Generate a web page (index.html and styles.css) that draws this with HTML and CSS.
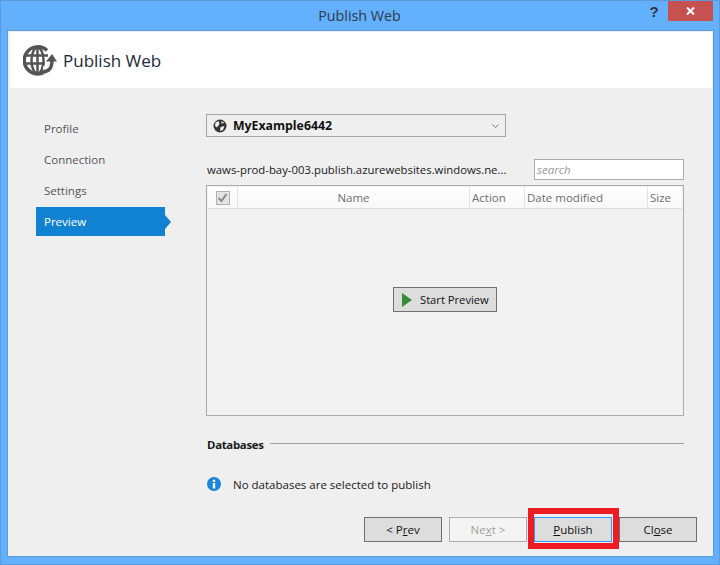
FILE: index.html
```html
<!DOCTYPE html>
<html lang="en">
<head>
<meta charset="utf-8">
<title>Publish Web</title>
<link rel="stylesheet" href="styles.css">
</head>
<body>
<div class="window">
  <div class="titlebar">
    <div class="title">Publish Web</div>
    <div class="help">?</div>
    <div class="close">
      <svg width="9" height="8" viewBox="0 0 9 8"><path d="M1 0.5 L8 7.5 M8 0.5 L1 7.5" stroke="#fff" stroke-width="2" fill="none"/></svg>
    </div>
  </div>
  <div class="client">
    <header class="header">
      <svg class="globe" width="34" height="32" viewBox="0 0 34 32" fill="none" stroke="#555" stroke-width="2.500">
        <path d="M24 5.500 A13.500 13.500 0 1 0 27 21" stroke-width="3.500"/>
        <ellipse cx="14.500" cy="15.500" rx="6" ry="13"/>
        <path d="M14.500 2.500 V28.500 M3 10.500 H25 M2 18.500 H22"/>
        <path d="M20 25 Q28 25 28.500 16" stroke="#fff" stroke-width="7"/>
        <path d="M20 26.500 Q29 27 29 15" stroke-width="3.500"/>
        <path d="M23 16.500 L29 9 L34 16.500 Z" fill="#555" stroke="none"/>
      </svg>
      <h1 class="heading">Publish Web</h1>
    </header>
    <div class="main">
      <nav class="sidebar">
        <div class="step">Profile</div>
        <div class="step">Connection</div>
        <div class="step">Settings</div>
        <div class="step step-active">Preview</div>
      </nav>
      <section class="content">
        <div class="profile-select">
          <svg class="profile-icon" width="14" height="14" viewBox="0 0 14 14">
            <circle cx="7" cy="7" r="6.500" fill="#333"/>
            <path d="M2.500 3.500 L5.500 2 L6.500 5 L4 8.500 L2 7 Z M7.500 8 L11.500 7 L10 11 L7 12 Z M8.500 2 L11.500 4 L8.500 4.500 Z" fill="#efefef"/>
          </svg>
          <span class="profile-name">MyExample6442</span>
          <svg class="chevron" width="7" height="4" viewBox="0 0 7 4"><path d="M0.500 0.500 L3.500 3.500 L6.500 0.500" stroke="#777" fill="none"/></svg>
        </div>
        <div class="url-row">
          <span class="url">waws-prod-bay-003.publish.azurewebsites.windows.ne...</span>
          <div class="search">search</div>
        </div>
        <div class="table">
          <div class="table-head">
            <div class="col col-check"><span class="checkbox"><svg width="11" height="10" viewBox="0 0 11 10"><path d="M1.500 5 L4.500 8 L9.500 1" stroke="#8a8a8a" stroke-width="2" fill="none"/></svg></span></div>
            <div class="col col-name">Name</div>
            <div class="col">Action</div>
            <div class="col">Date modified</div>
            <div class="col col-last">Size</div>
          </div>
          <div class="table-body">
            <button class="btn btn-preview" type="button">
              <svg width="10" height="14" viewBox="0 0 10 14"><path d="M0 0 L10 7 L0 14 Z" fill="#3a8a35"/></svg>
              Start Preview
            </button>
          </div>
        </div>
        <div class="db-heading"><strong class="db-title">Databases</strong><span class="rule"></span></div>
        <div class="info-row">
          <svg width="14" height="14" viewBox="0 0 14 14"><circle cx="7" cy="7" r="7" fill="#1b86d8"/><rect x="5.800" y="6" width="2.400" height="5.500" fill="#fff"/><rect x="5.800" y="2.800" width="2.400" height="2.200" fill="#fff"/></svg>
          <span>No databases are selected to publish</span>
        </div>
      </section>
    </div>
    <footer class="footer">
      <button class="btn btn-nav" type="button">&lt; P<u>r</u>ev</button>
      <button class="btn btn-nav btn-disabled" type="button">Ne<u>x</u>t &gt;</button>
      <button class="btn btn-nav btn-focus" type="button"><u>P</u>ublish<span class="highlight"></span></button>
      <button class="btn btn-nav" type="button">Cl<u>o</u>se</button>
    </footer>
  </div>
</div>
</body>
</html>
```
FILE: styles.css
```css
* { box-sizing: border-box; }
html, body { margin: 0; padding: 0; }
body {
  width: 720px;
  height: 565px;
  overflow: hidden;
  font-family: "Open Sans", "Noto Sans", sans-serif;
  font-size: 11.5px;
  color: #1a1a1a;
}
.window {
  width: 720px;
  height: 565px;
  display: flex;
  flex-direction: column;
  background: #63b0ff;
  border: 1px solid #5b9bd8;
  padding: 0 5px 7px 6px;
}
.titlebar {
  height: 29px;
  flex: none;
  display: flex;
  align-items: flex-start;
  position: relative;
  margin-right: -5px;
}
.title {
  position: absolute;
  left: -7px;
  right: 0;
  top: 6px;
  text-align: center;
  font-size: 14.3px;
  color: #2f3b47;
  line-height: 18px;
}
.help {
  margin-left: auto;
  margin-right: 8px;
  width: 12px;
  height: 20px;
  font-family: "Liberation Sans", sans-serif;
  font-weight: 700;
  font-size: 15px;
  line-height: 21px;
  color: #333;
  text-align: center;
  position: relative;
}
.close {
  width: 45px;
  height: 20px;
  background: #c75050;
  display: flex;
  align-items: center;
  justify-content: center;
  position: relative;
  margin-right: 6px;
}
.client {
  flex: 1;
  min-height: 0;
  display: flex;
  flex-direction: column;
  border: 1px solid #5b9bd8;
  background: #efefef;
  padding: 1px 1px 0 2px;
}
.header {
  height: 56px;
  flex: none;
  background: #fff;
  display: flex;
  align-items: center;
  padding-left: 13px;
  gap: 6px;
}
.globe { margin-top: 1px; }
.heading {
  margin: 2px 0 0;
  font-size: 17px;
  font-weight: 400;
  color: #1a2a3a;
  line-height: 24px;
}
.main {
  flex: 1;
  min-height: 0;
  display: flex;
  padding: 26px 0 0 26px;
}
.sidebar {
  width: 129px;
  flex: none;
  display: flex;
  flex-direction: column;
  gap: 2px;
}
.step {
  height: 29px;
  line-height: 30px;
  padding-left: 8px;
  color: #555;
  position: relative;
}
.step-active {
  background: #1182d1;
  color: #fff;
}
.step-active::after {
  content: "";
  position: absolute;
  left: 100%;
  top: 8px;
  border-left: 6px solid #1182d1;
  border-top: 7px solid transparent;
  border-bottom: 7px solid transparent;
}
.content {
  width: 478px;
  margin-left: 41px;
  flex: none;
  display: flex;
  flex-direction: column;
}
.profile-select {
  width: 300px;
  height: 23px;
  flex: none;
  border: 1px solid #a5a5a5;
  background: #efefef;
  display: flex;
  align-items: center;
  padding: 0 4px 0 6px;
}
.profile-name {
  font-weight: 700;
  font-size: 12.3px;
  color: #111;
  margin-left: 6px;
}
.chevron { margin-left: auto; margin-right: 2px; }
.url-row {
  margin-top: 22px;
  height: 21px;
  flex: none;
  display: flex;
  align-items: center;
  justify-content: space-between;
  padding-left: 1px;
}
.url { color: #1a1a1a; font-size: 11.35px; }
.search {
  width: 150px;
  height: 21px;
  border: 1px solid #ababab;
  background: #fff;
  color: #999;
  font-style: italic;
  padding-left: 2px;
  line-height: 20px;
}
.table {
  margin-top: 5px;
  height: 231px;
  flex: none;
  border: 1px solid #ababab;
  display: flex;
  flex-direction: column;
  background: #f2f2f2;
}
.table-head {
  height: 22px;
  flex: none;
  display: grid;
  grid-template-columns: 30px 232px 55px 123px 1fr;
  margin: 1px 1px 0;
  background: linear-gradient(#fff, #f8f8f8);
  border-bottom: 1px solid #dcdcdc;
  color: #6d6d6d;
  line-height: 21px;
}
.col {
  border-right: 1px solid #e3e3e3;
  padding-left: 2px;
}
.col-check {
  display: flex;
  align-items: center;
  justify-content: center;
  padding: 0;
}
.col-name { text-align: center; padding: 0; }
.col-last { border-right: 0; }
.checkbox {
  width: 14px;
  height: 14px;
  border: 1px solid #b0b0b0;
  background: #e4e4e4;
  display: flex;
  align-items: center;
  justify-content: center;
}
.table-body {
  flex: 1;
  display: flex;
  align-items: center;
  justify-content: center;
  padding: 0 0 25px 0;
}
.btn {
  font: inherit;
  color: #111;
  background: #dddddd;
  border: 1px solid #707070;
  padding: 0;
  margin: 0;
}
.btn-preview {
  width: 104px;
  height: 25px;
  display: flex;
  align-items: center;
  padding-left: 8px;
  gap: 8px;
  font-size: 11.2px;
}
.db-heading {
  margin-top: 19px;
  height: 18px;
  flex: none;
  display: flex;
  align-items: center;
  gap: 6px;
  padding-left: 1px;
}
.db-title { font-weight: 700; font-size: 11.4px; letter-spacing: -0.3px; }
.rule { flex: 1; height: 1px; background: #a0a0a0; margin-top: -1px; }
.info-row {
  margin-top: 24px;
  display: flex;
  align-items: center;
  gap: 12px;
  padding-left: 1px;
  height: 14px;
  flex: none;
}
.footer {
  flex: none;
  display: flex;
  justify-content: flex-end;
  gap: 7px;
  padding: 0 15px 14px 0;
}
.btn-nav {
  width: 78px;
  height: 25px;
  position: relative;
}
.btn-disabled {
  background: #f4f4f4;
  border-color: #adadad;
  color: #a0a0a0;
}
.btn-focus { border-color: #3399ff; }
.highlight {
  position: absolute;
  left: -7px;
  top: -10px;
  width: 91px;
  height: 41px;
  border: 6px solid #ed1c24;
}
```
